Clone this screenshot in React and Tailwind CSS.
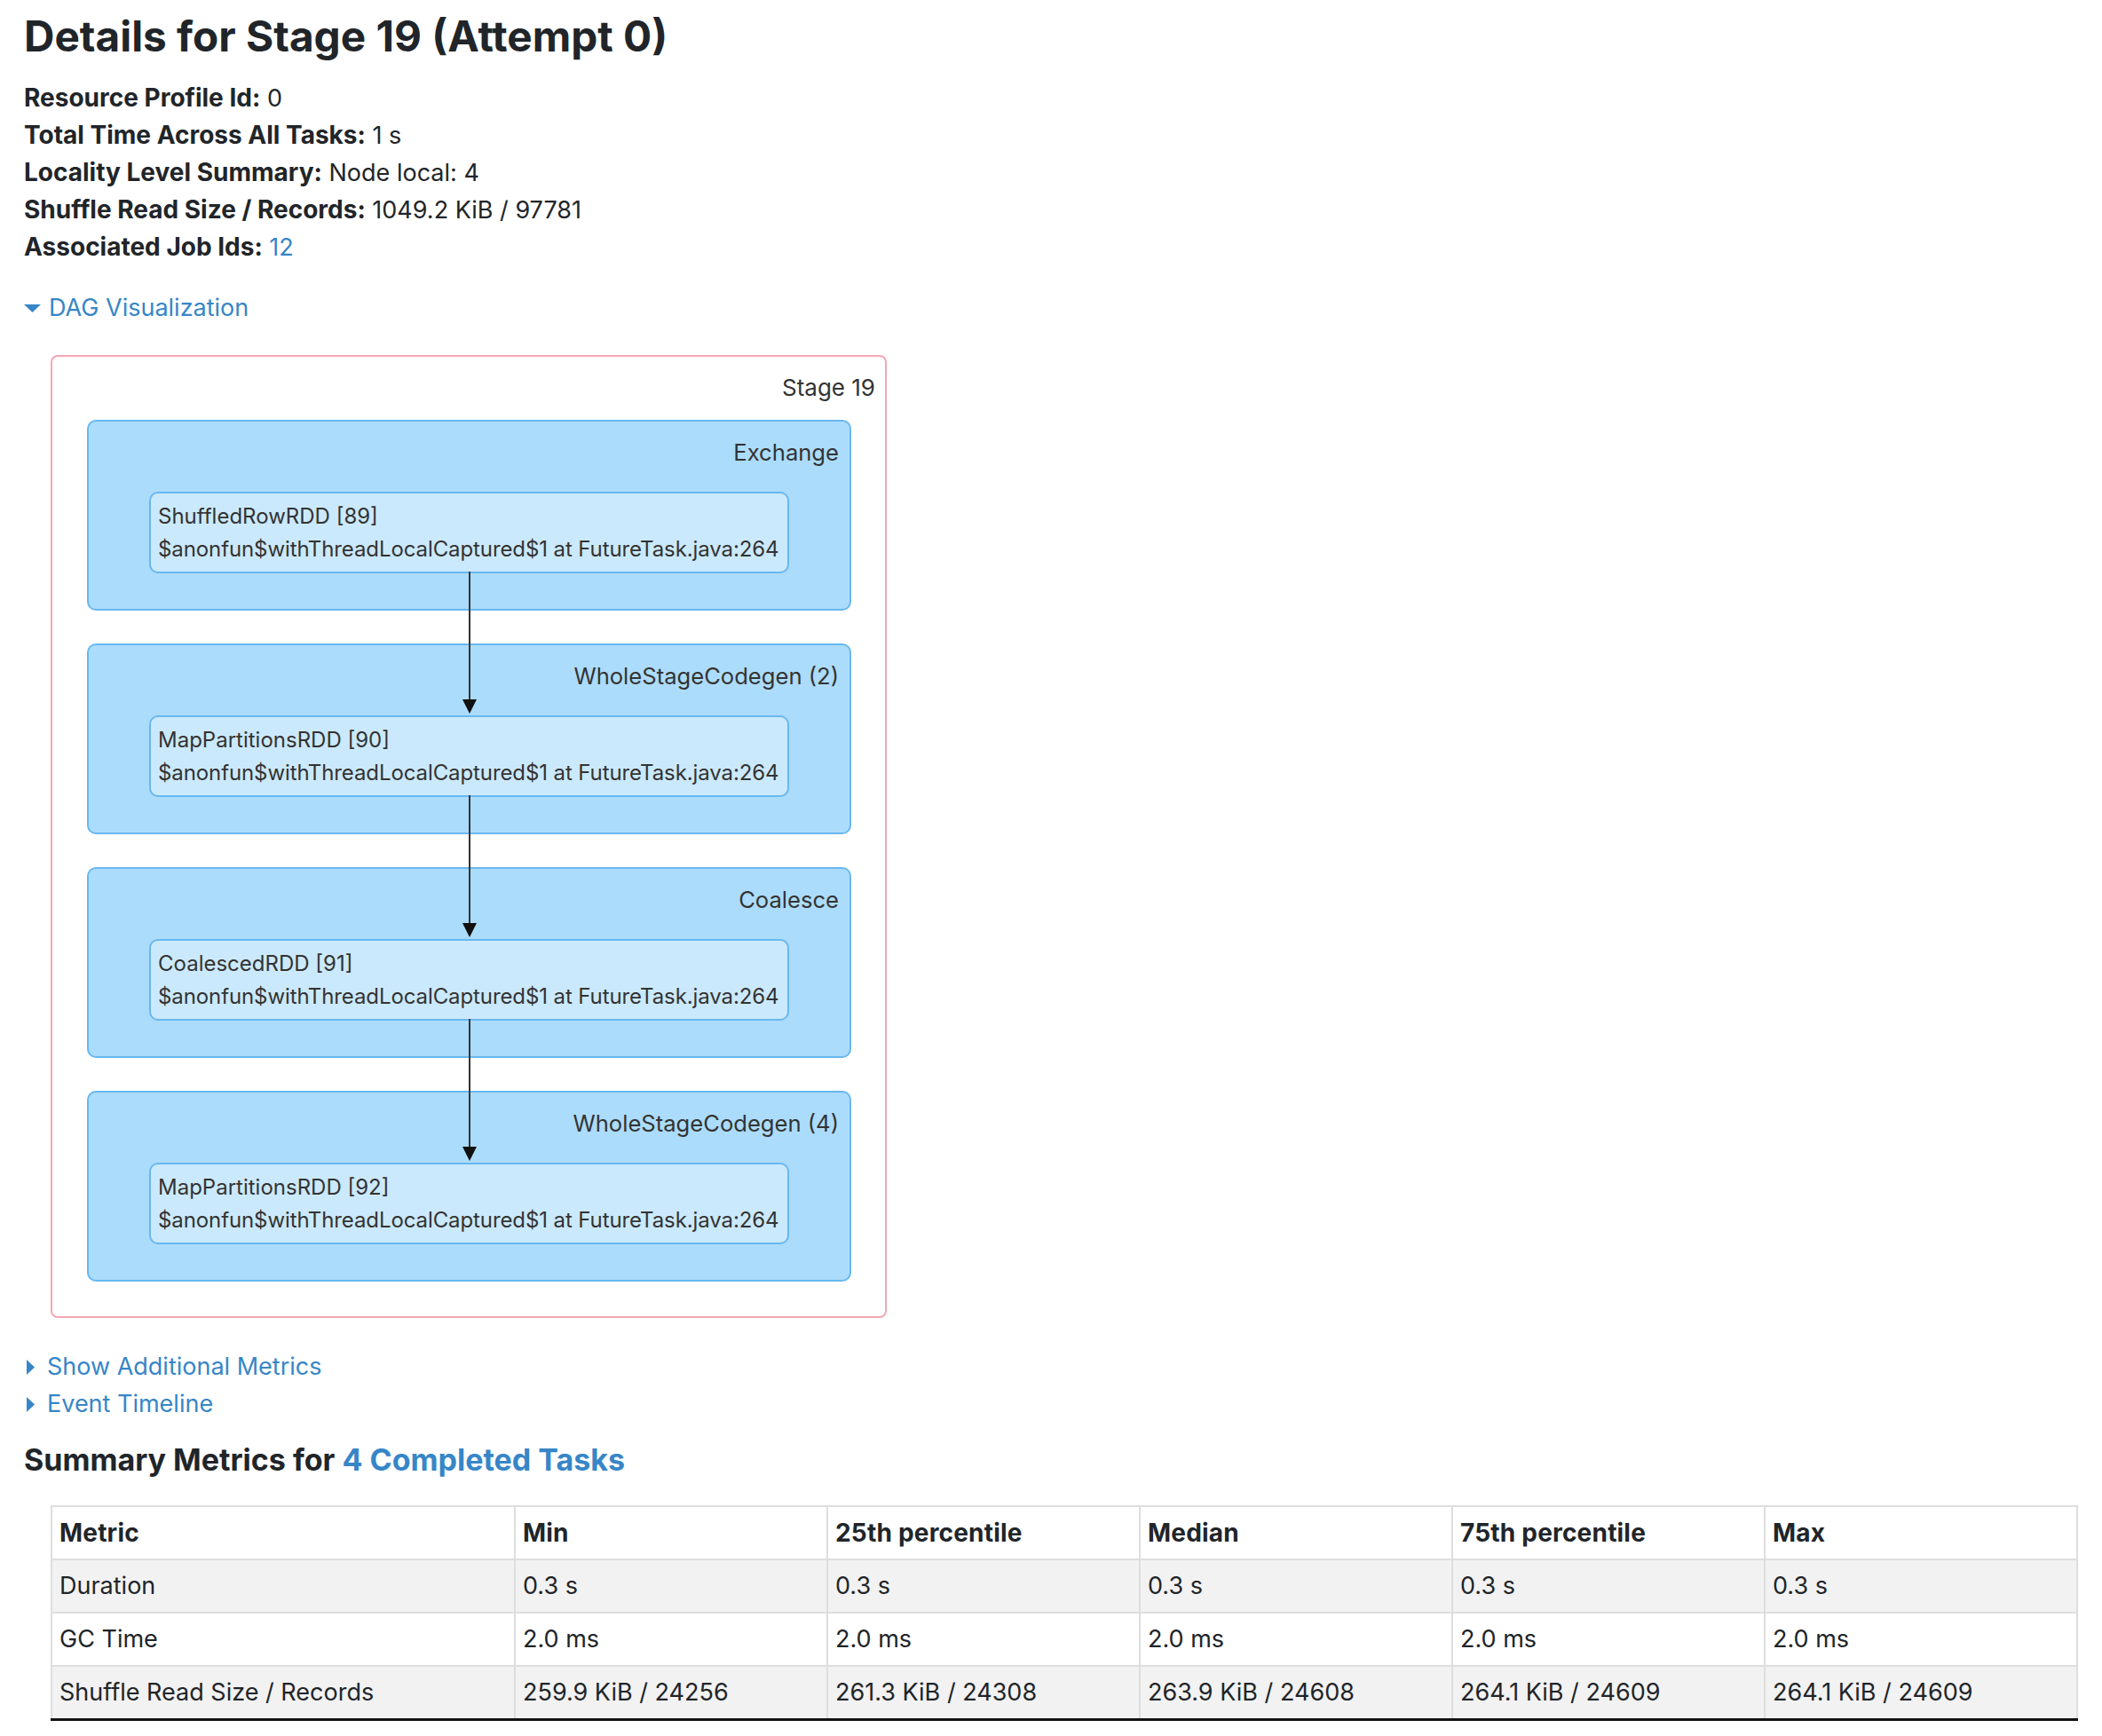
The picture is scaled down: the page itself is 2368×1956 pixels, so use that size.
import React from "react";

const LINK = "text-[#3786c7]";

function Caret({ open }) {
  if (open) {
    return (
      <svg width="19" height="9" viewBox="0 0 19 9" className="shrink-0">
        <path d="M0 0 H19 L9.5 9 Z" fill="#3786c7" />
      </svg>
    );
  }
  return (
    <svg width="9" height="17" viewBox="0 0 9 17" className="shrink-0">
      <path d="M0 0 L9 8.5 L0 17 Z" fill="#3786c7" />
    </svg>
  );
}

function Arrow() {
  return (
    <svg
      width="20"
      height="160"
      viewBox="0 0 20 160"
      className="absolute top-full left-1/2 -ml-[10px] z-10"
    >
      <line x1="10" y1="0" x2="10" y2="146" stroke="#333" strokeWidth="2" />
      <path d="M2 144 L18 144 L10 160 Z" fill="#111" />
    </svg>
  );
}

function Cluster({ title, rdd, last }) {
  return (
    <div className="h-[215px] rounded-[10px] border-2 border-[#68b8f0] bg-[#acdcfb] flex flex-col">
      <div className="text-right pr-[12px] pt-[14px] leading-[42px] text-[25.6px] text-[#333]">
        {title}
      </div>
      <div className="relative mt-[23px] mx-[68px] h-[92px] rounded-[10px] border-2 border-[#68b8f0] bg-[#cbe9fc] px-[8px] pt-[7px] text-[24px] leading-[37px] text-[#333]">
        <div>{rdd}</div>
        <div className="whitespace-nowrap tracking-[-0.1px]">$anonfun$withThreadLocalCaptured$1 at FutureTask.java:264</div>
        {!last && <Arrow />}
      </div>
    </div>
  );
}

export default function App() {
  const info = [
    ["Resource Profile Id:", "0"],
    ["Total Time Across All Tasks:", "1 s"],
    ["Locality Level Summary:", "Node local: 4"],
    ["Shuffle Read Size / Records:", "1049.2 KiB / 97781"],
  ];

  const clusters = [
    { title: "Exchange", rdd: "ShuffledRowRDD [89]" },
    { title: "WholeStageCodegen (2)", rdd: "MapPartitionsRDD [90]" },
    { title: "Coalesce", rdd: "CoalescedRDD [91]" },
    { title: "WholeStageCodegen (4)", rdd: "MapPartitionsRDD [92]" },
  ];

  const cols = ["Metric", "Min", "25th percentile", "Median", "75th percentile", "Max"];
  const rows = [
    ["Duration", "0.3 s", "0.3 s", "0.3 s", "0.3 s", "0.3 s"],
    ["GC Time", "2.0 ms", "2.0 ms", "2.0 ms", "2.0 ms", "2.0 ms"],
    [
      "Shuffle Read Size / Records",
      "259.9 KiB / 24256",
      "261.3 KiB / 24308",
      "263.9 KiB / 24608",
      "264.1 KiB / 24609",
      "264.1 KiB / 24609",
    ],
  ];

  return (
    <div className="min-h-screen bg-white px-[27px] pt-[16px] pb-10 text-[#212529] font-['Inter',sans-serif] text-[27px] leading-[42px]">
      <h3 className="text-[47.7px] leading-[50px] font-bold">Details for Stage 19 (Attempt 0)</h3>

      <ul className="mt-[23px]">
        {info.map(([k, v]) => (
          <li key={k} className="h-[42px]">
            <strong className="font-bold text-[28px]">{k}</strong> {v}
          </li>
        ))}
        <li className="h-[42px]">
          <strong className="font-bold text-[28px]">Associated Job Ids:</strong>{" "}
          <a className={LINK}>12</a>
        </li>
      </ul>

      <div className={`mt-[27px] flex items-center gap-[9px] ${LINK}`}>
        <Caret open />
        <span>DAG Visualization</span>
      </div>

      <div className="mt-[32px] ml-[30px] w-[942px] rounded-[8px] border-2 border-[#f4a7b3] pb-[39px]">
        <div className="text-right pr-[11px] pt-[14px] text-[26px] text-[#333]">Stage 19</div>
        <div className="mt-[15px] ml-[39px] mr-[38px] flex flex-col gap-[37px]">
          {clusters.map((c, i) => (
            <Cluster key={c.title} title={c.title} rdd={c.rdd} last={i === clusters.length - 1} />
          ))}
        </div>
      </div>

      <div className={`mt-[34px] flex items-center gap-[14px] pl-[3px] ${LINK}`}>
        <Caret />
        <span>Show Additional Metrics</span>
      </div>
      <div className={`flex items-center gap-[14px] pl-[3px] ${LINK}`}>
        <Caret />
        <span>Event Timeline</span>
      </div>

      <h4 className="mt-[22px] text-[34px] leading-[40px] font-bold">
        Summary Metrics for <a className={LINK}>4 Completed Tasks</a>
      </h4>

      <div className="mt-[31px] pl-[30px]">
        <table className="w-full table-fixed border-collapse text-left">
          <thead>
            <tr className="h-[60px]">
              {cols.map((c, i) => (
                <th
                  key={c}
                  className={`border-2 border-[#dedede] px-[8px] font-bold text-[28px] tracking-[0.2px] ${i === 0 ? "w-[522px]" : ""}`}
                >
                  {c}
                </th>
              ))}
            </tr>
          </thead>
          <tbody>
            {rows.map((r, ri) => (
              <tr key={r[0]} className={`h-[60px] ${ri % 2 === 0 ? "bg-[#f2f2f2]" : "bg-white"}`}>
                {r.map((cell, ci) => (
                  <td
                    key={ci}
                    className={`border-2 border-[#dedede] px-[8px] ${ri === rows.length - 1 ? "border-b-[3px] border-b-[#111]" : ""}`}
                  >
                    {cell}
                  </td>
                ))}
              </tr>
            ))}
          </tbody>
        </table>
      </div>
    </div>
  );
}
